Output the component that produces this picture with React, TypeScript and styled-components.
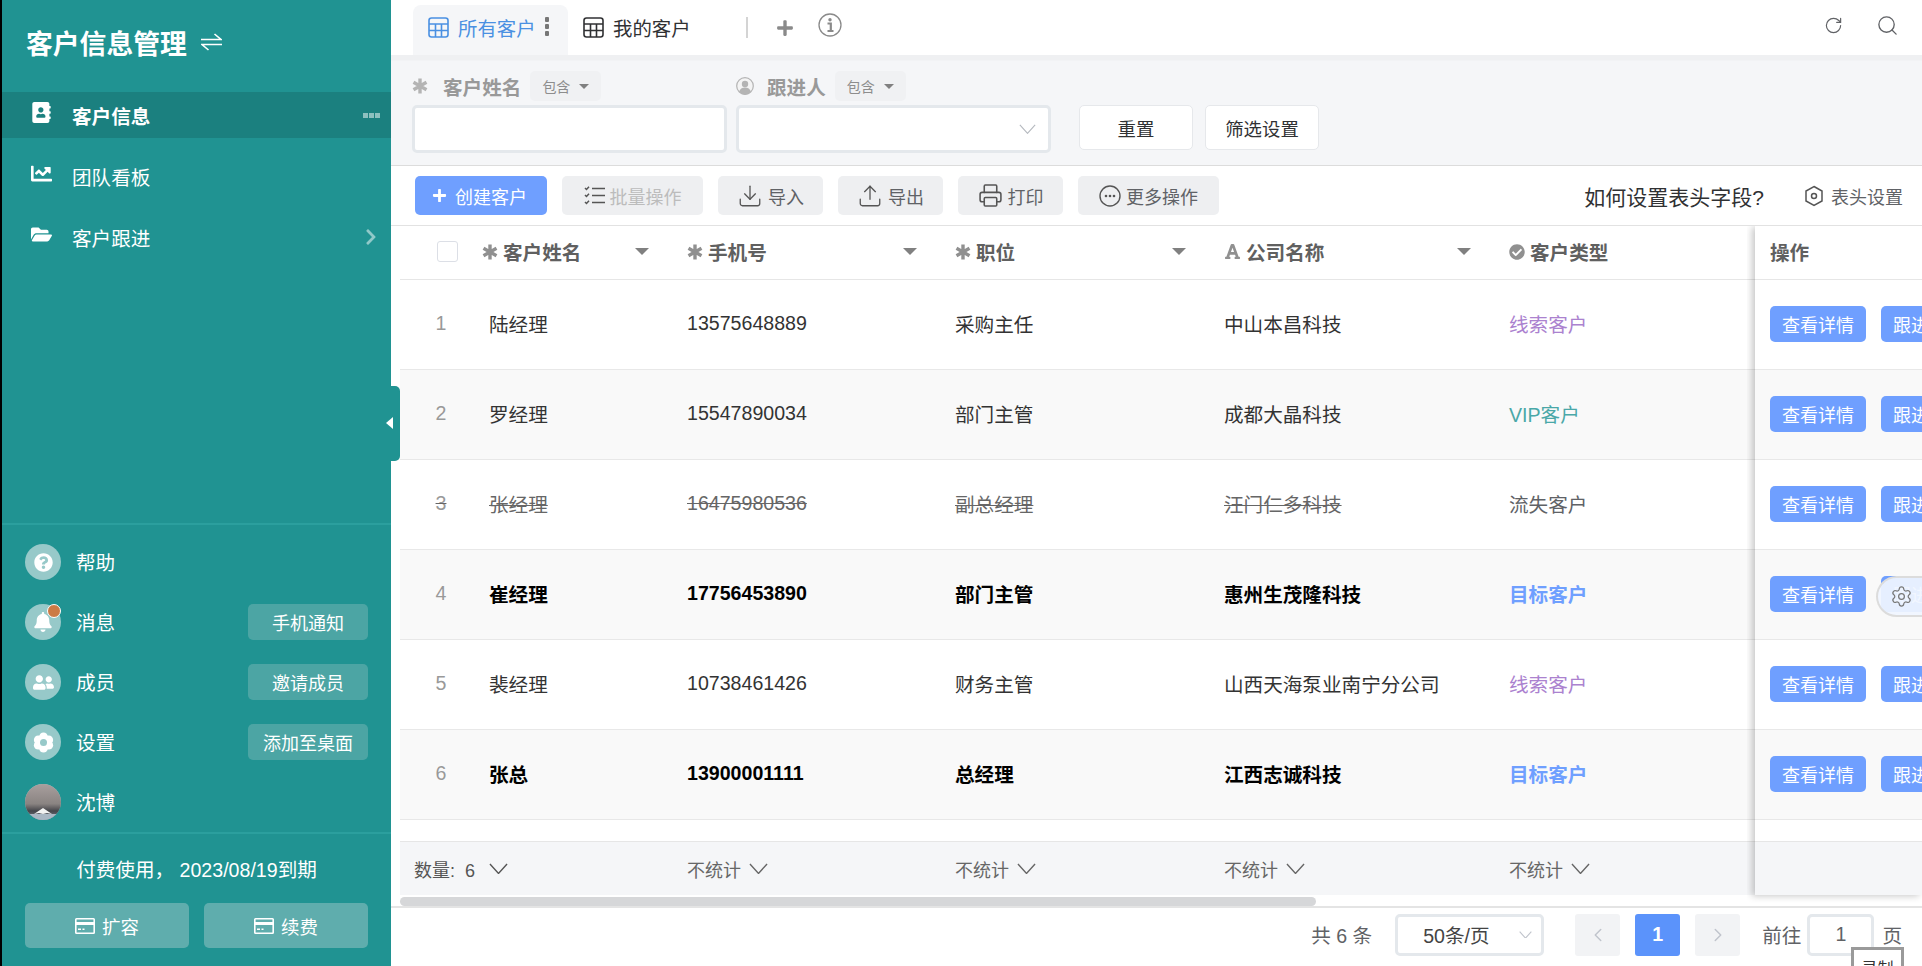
import React from "react";
import styled, { createGlobalStyle } from "styled-components";
import {
  FaAddressBook,
  FaBell,
  FaCheckCircle,
  FaChevronRight,
  FaChartLine,
  FaFolderOpen,
  FaFont,
  FaPlus,
  FaQuestionCircle,
  FaUserFriends,
} from "react-icons/fa";
import {
  ChevronLeft,
  ChevronRight,
  Download,
  Printer,
  RotateCw,
  Search,
  Settings,
  Upload,
} from "lucide-react";

const COLUMNS = "82px 205px 268px 269px 285px 246px";

const GlobalStyle = createGlobalStyle`
  html, body {
    margin: 0;
    height: 100%;
    overflow: hidden;
    background: #fff;
    font-family: "Liberation Sans", "Noto Sans CJK SC", sans-serif;
  }
  * { box-sizing: border-box; }
`;

const Shell = styled.div`
  display: flex;
  width: 1922px;
  height: 966px;
  border-left: 2px solid #000;
  overflow: hidden;
`;

const Sidebar = styled.aside`
  position: relative;
  z-index: 3;
  flex: 0 0 389px;
  display: flex;
  flex-direction: column;
  background: #209392;
  color: #fff;
`;

const Brand = styled.div`
  height: 92px;
  display: flex;
  align-items: center;
  padding: 0 0 8px 24px;
  gap: 14px;
  font-size: 26.8px;
  font-weight: 700;
`;

const Nav = styled.nav`
  display: flex;
  flex-direction: column;
  gap: 15px;
`;

const NavItem = styled.div<{ $active?: boolean }>`
  height: 46px;
  display: flex;
  align-items: center;
  padding: 0 11px 0 29px;
  font-size: 19.6px;
  font-weight: ${(p) => (p.$active ? 700 : 400)};
  background: ${(p) => (p.$active ? "#1b807f" : "transparent")};
`;

const NavIcon = styled.span`
  width: 41px;
  display: flex;
  font-size: 21px;
  margin-top: -6px;
`;

const NavTrail = styled.span`
  margin-left: auto;
  display: flex;
  gap: 1px;
  align-items: center;
  color: rgba(255, 255, 255, 0.5);
`;

const Dot = styled.i`
  width: 5px;
  height: 5px;
  background: rgba(255, 255, 255, 0.5);
`;

const Collapse = styled.div`
  position: absolute;
  left: 100%;
  top: 386px;
  width: 9px;
  height: 75px;
  background: #209392;
  border-radius: 0 5px 5px 0;

  &::before {
    content: "";
    position: absolute;
    left: -5px;
    top: 31px;
    border-style: solid;
    border-width: 6px 7px 6px 0;
    border-color: transparent #fff transparent transparent;
  }
`;

const Lower = styled.div`
  margin-top: auto;
  border-top: 2px solid #2b9f9e;
`;

const UtilityList = styled.div`
  display: flex;
  flex-direction: column;
  padding: 7px 23px 0;
  height: 309px;
  border-bottom: 2px solid #2b9f9e;
`;

const UtilityRow = styled.div`
  height: 60px;
  display: flex;
  align-items: center;
  gap: 15px;
  font-size: 19.6px;
`;

const UtilityLabel = styled.span`
  margin-top: -2px;
`;

const Round = styled.span`
  position: relative;
  width: 36px;
  height: 36px;
  border-radius: 50%;
  background: #97c9c9;
  display: flex;
  align-items: center;
  justify-content: center;
  color: #fff;
`;

const Badge = styled.i`
  position: absolute;
  right: 0;
  top: 0;
  width: 14px;
  height: 14px;
  border-radius: 50%;
  background: #cc7a45;
  border: 1px solid #fff;
`;

const SideButton = styled.button`
  margin-left: auto;
  width: 120px;
  height: 36px;
  padding: 0;
  border: 0;
  border-radius: 5px;
  background: #4ca5a4;
  color: #fff;
  font: inherit;
  font-size: 18px;
`;

const Expiry = styled.div`
  height: 69px;
  display: flex;
  align-items: center;
  justify-content: center;
  font-size: 19.6px;
`;

const BillingRow = styled.div`
  display: flex;
  gap: 15px;
  padding: 0 23px 18px;
`;

const BillingButton = styled.button`
  flex: 1;
  height: 45px;
  display: flex;
  align-items: center;
  justify-content: center;
  gap: 7px;
  border: 0;
  border-radius: 5px;
  background: #5fadad;
  color: #fff;
  font: inherit;
  font-size: 18.5px;
`;

const Main = styled.main`
  flex: 1;
  min-width: 0;
  display: flex;
  flex-direction: column;
`;

const TabBar = styled.header`
  height: 55px;
  display: flex;
  align-items: flex-end;
  padding: 0 23px 0 22px;
`;

const Tab = styled.div<{ $active?: boolean }>`
  height: 50px;
  width: 155px;
  display: flex;
  align-items: center;
  gap: 9px;
  padding: 0 0 5px 15px;
  font-size: 19.4px;
  border-radius: 8px 8px 0 0;
  color: ${(p) => (p.$active ? "#4a90e2" : "#303133")};
  background: ${(p) => (p.$active ? "#f5f6f8" : "transparent")};
`;

const TabDots = styled.span`
  display: flex;
  flex-direction: column;
  gap: 2px;
  margin-bottom: 3px;

  i {
    width: 4px;
    height: 5px;
    border-radius: 1px;
    background: #777;
  }
`;

const TabTools = styled.div`
  height: 55px;
  display: flex;
  align-items: center;
  gap: 24px;
  margin-left: 23px;
  color: #8a8a8a;
`;

const TabDivider = styled.i`
  width: 2px;
  height: 21px;
  background: #d4d4d4;
  margin-right: 4px;
`;

const RaisedIcon = styled.span`
  display: flex;
  margin-top: -5px;
`;

const TabActions = styled.div`
  margin-left: auto;
  height: 55px;
  padding-bottom: 4px;
  display: flex;
  align-items: center;
  gap: 33px;
  color: #606266;
`;

const FilterBar = styled.section`
  height: 111px;
  display: flex;
  padding: 16px 0 0 21px;
  gap: 9px;
  background: linear-gradient(#eff0f2 0, #eff0f2 5px, #f5f6f8 6px);
  border-bottom: 1px solid #dcdcdc;
`;

const FilterField = styled.div`
  width: 315px;
  display: flex;
  flex-direction: column;
  gap: 4px;
`;

const FilterLabel = styled.div`
  height: 30px;
  display: flex;
  align-items: center;
  color: #999;
  font-size: 19.6px;
  font-weight: 700;
`;

const LabelIcon = styled.span`
  width: 31px;
  display: flex;
  color: #b4b4b4;
`;

const MatchTag = styled.span`
  margin-left: 9px;
  width: 71px;
  height: 30px;
  display: flex;
  align-items: center;
  justify-content: center;
  gap: 9px;
  border-radius: 5px;
  background: #f0f1f3;
  color: #8d8d8d;
  font-size: 14px;
  font-weight: 400;
`;

const Caret = styled.i`
  border-style: solid;
  border-width: 5px 5px 0;
  border-color: #808080 transparent transparent;
`;

const FieldBox = styled.div`
  height: 48px;
  display: flex;
  align-items: center;
  justify-content: flex-end;
  padding-right: 12px;
  background: #fff;
  border: 3px solid #e4e8ec;
  border-radius: 5px;
  color: #b4b8be;
`;

const FilterActions = styled.div`
  display: flex;
  align-self: flex-start;
  gap: 12px;
  margin: 34px 0 0 19px;
`;

const PlainButton = styled.button`
  width: 114px;
  height: 45px;
  padding: 0;
  background: #fff;
  border: 1px solid #e6e8eb;
  border-radius: 5px;
  color: #303133;
  font: inherit;
  font-size: 18.4px;
`;

const Toolbar = styled.section`
  height: 60px;
  display: flex;
  align-items: center;
  gap: 15px;
  padding: 0 19px 0 24px;
  border-bottom: 1px solid #e2e2e2;
`;

const ToolButton = styled.button<{ $primary?: boolean; $muted?: boolean; $w: number }>`
  width: ${(p) => p.$w}px;
  height: 39px;
  padding: 0 ${(p) => (p.$primary ? 3 : 0)}px 0 0;
  display: flex;
  align-items: center;
  justify-content: center;
  gap: ${(p) => (p.$primary ? 8 : 5)}px;
  border: 0;
  border-radius: 5px;
  font: inherit;
  font-size: 18px;
  background: ${(p) => (p.$primary ? "#6f9fff" : "#eeeff1")};
  color: ${(p) => (p.$primary ? "#fff" : "#555")};

  span {
    color: ${(p) => (p.$muted ? "#bcbcbc" : "#606266")};
  }
`;

const ToolbarRight = styled.div`
  margin-left: auto;
  display: flex;
  align-items: center;
  color: #606266;
  font-size: 18px;
`;

const HelpLink = styled.span`
  font-size: 21px;
  color: #303133;
  margin-right: 40px;
`;

const HeadSetting = styled.span`
  display: flex;
  align-items: center;
  gap: 7px;
`;

const TableArea = styled.section`
  position: relative;
  height: 669px;
  display: flex;
  padding-left: 9px;
`;

const ScrollPane = styled.div`
  flex: 1;
  min-width: 0;
  display: flex;
  flex-direction: column;
`;

const FixedPane = styled.div`
  position: relative;
  z-index: 2;
  flex: 0 0 167px;
  display: flex;
  flex-direction: column;
  overflow: hidden;
  box-shadow: -3px 1px 7px rgba(0, 0, 0, 0.22);
  clip-path: inset(0 0 -8px -8px);
`;

const HeadRow = styled.div`
  height: 54px;
  flex: none;
  display: grid;
  grid-template-columns: ${COLUMNS};
  padding-bottom: 2px;
  border-bottom: 1px solid #e6e6e6;
  background: #fff;
`;

const HeadCell = styled.div`
  display: flex;
  align-items: center;
  gap: 5px;
  padding-right: 38px;
  color: #606060;
  font-size: 19.6px;
  font-weight: 700;
`;

const HeadIcon = styled.span`
  display: flex;
  color: #909090;
`;

const HeadCaret = styled(Caret)`
  margin-left: auto;
  border-width: 7px 7px 0;
`;

const CheckCell = styled.div`
  display: flex;
  align-items: center;
  padding-left: 37px;
`;

const CheckBox = styled.i`
  width: 21px;
  height: 21px;
  border: 1px solid #dcdfe6;
  border-radius: 3px;
  background: #fff;
`;

const BodyRow = styled.div<{ $even: boolean; $kind: "plain" | "strike" | "bold" }>`
  height: 90px;
  flex: none;
  display: grid;
  grid-template-columns: ${COLUMNS};
  align-items: center;
  padding-bottom: 2px;
  border-bottom: 1px solid #e8e8e8;
  font-size: 19.6px;
  font-weight: ${(p) => (p.$kind === "bold" ? 700 : 400)};
  color: ${(p) => (p.$kind === "bold" ? "#000" : p.$kind === "strike" ? "#666" : "#333")};
  text-decoration: ${(p) => (p.$kind === "strike" ? "line-through" : "none")};
  background: ${(p) => (p.$even ? "#f9f9f9" : "#fff")};
`;

const IndexCell = styled.div`
  text-align: center;
  color: #999;
  font-weight: 400;
`;

const NameCell = styled.div`
  padding-left: 7px;
`;

const TypeCell = styled.div<{ $color: string }>`
  display: inline-block;
  color: ${(p) => p.$color};
`;

const Spacer = styled.div`
  flex: 1;
  border-bottom: 1px solid #e6e6e6;
  background: #fff;
`;

const SummaryRow = styled.div`
  height: 53px;
  flex: none;
  display: grid;
  grid-template-columns: ${COLUMNS};
  align-items: center;
  background: #f5f6f8;
  color: #666;
  font-size: 18px;
`;

const SummaryCell = styled.div`
  display: flex;
  align-items: center;
  gap: 8px;
`;

const CountCell = styled(SummaryCell)`
  grid-column: span 2;
  padding-left: 14px;
  gap: 14px;
  color: #555;
`;

const OpHead = styled.div`
  height: 54px;
  flex: none;
  display: flex;
  align-items: center;
  padding: 0 0 2px 15px;
  border-bottom: 1px solid #e6e6e6;
  background: #fff;
  color: #606060;
  font-size: 19.6px;
  font-weight: 700;
`;

const OpRow = styled.div<{ $even: boolean }>`
  height: 90px;
  flex: none;
  display: flex;
  align-items: center;
  gap: 15px;
  padding: 0 0 2px 15px;
  border-bottom: 1px solid #e8e8e8;
  background: ${(p) => (p.$even ? "#f9f9f9" : "#fff")};
`;

const OpButton = styled.button`
  flex: none;
  width: 96px;
  height: 36px;
  padding: 0;
  border: 0;
  border-radius: 5px;
  background: #6f9fff;
  color: #fff;
  font: inherit;
  font-size: 18px;
`;

const OpSummary = styled.div`
  height: 53px;
  flex: none;
  background: #f5f6f8;
`;

const FloatGear = styled.div`
  position: absolute;
  z-index: 4;
  right: 0;
  top: 350px;
  width: 46px;
  height: 41px;
  display: flex;
  align-items: center;
  padding-left: 12px;
  border: 2px solid #dcdcdc;
  border-right: 0;
  border-radius: 21px 0 0 21px;
  background: rgba(240, 245, 255, 0.92);
  color: #777;
`;

const ScrollTrack = styled.div`
  height: 13px;
  flex: none;
  padding: 2px 0 0 9px;
  border-bottom: 2px solid #e4e4e4;
`;

const ScrollThumb = styled.div`
  width: 916px;
  height: 9px;
  border-radius: 5px;
  background: #d6d7d9;
`;

const Pagination = styled.footer`
  position: relative;
  height: 58px;
  flex: none;
  display: flex;
  align-items: center;
  justify-content: flex-end;
  padding: 0 20px 5px 0;
  color: #606266;
  font-size: 19.6px;
`;

const PageSelect = styled.div`
  width: 149px;
  height: 42px;
  margin: 0 31px 0 23px;
  display: flex;
  align-items: center;
  padding: 0 9px 0 25px;
  justify-content: space-between;
  border: 3px solid #e4e8ec;
  border-radius: 5px;
  color: #444;

  svg {
    color: #c0c4cc;
  }
`;

const PageButton = styled.span<{ $current?: boolean }>`
  width: 45px;
  height: 42px;
  margin-right: 15px;
  display: flex;
  align-items: center;
  justify-content: center;
  border-radius: 3px;
  font-weight: 700;
  background: ${(p) => (p.$current ? "#5b93fb" : "#f2f3f5")};
  color: ${(p) => (p.$current ? "#fff" : "#c0c4cc")};
`;

const Jump = styled.span`
  margin-left: 7px;
`;

const JumpBox = styled.div`
  width: 67px;
  height: 42px;
  margin: 0 8px 0 6px;
  display: flex;
  align-items: center;
  justify-content: center;
  border: 3px solid #e4e8ec;
  border-radius: 5px;
`;

const CopyHint = styled.div`
  position: absolute;
  right: 18px;
  top: 39px;
  width: 53px;
  height: 36px;
  padding-top: 5px;
  text-align: center;
  background: #fff;
  border: 3px solid #9a9a9a;
  color: #333;
  font-size: 16px;
`;

const Chevron = ({ w, stroke = 1.4 }: { w: number; stroke?: number }) => (
  <svg width={w} height={w * 0.6} viewBox="0 0 20 12" fill="none" stroke="currentColor" strokeWidth={(stroke * 20) / w}>
    <path d="M1 1l9 10 9-10" />
  </svg>
);

const Asterisk = ({ size = 16 }: { size?: number }) => (
  <svg width={size} height={size} viewBox="0 0 16 16" fill="none" stroke="currentColor" strokeWidth="3.4">
    <path d="M8 .5v15M1.500 4.250l13 7.500M14.500 4.250l-13 7.500" />
  </svg>
);

const TableIcon = () => (
  <svg width="21" height="21" viewBox="0 0 21 21" fill="none" stroke="currentColor" strokeWidth="1.6">
    <rect x="1" y="1" width="19" height="19" rx="2.5" />
    <path d="M1 7h19M1 13.5h19M7.500 7v13M13.500 7v13" />
  </svg>
);

const SwapIcon = () => (
  <svg width="21" height="18" viewBox="0 0 21 18" fill="none" stroke="#fff" strokeWidth="1.6">
    <path d="M0 6.500h20L13.500 1M21 11.500H1l6.500 5.500" />
  </svg>
);

const CardIcon = () => (
  <svg width="20" height="16" viewBox="0 0 20 16" fill="#fff">
    <path d="M1.500 0h17A1.500 1.500 0 0 1 20 1.500v13a1.500 1.500 0 0 1-1.500 1.500h-17A1.500 1.500 0 0 1 0 14.500v-13A1.500 1.500 0 0 1 1.500 0Zm.1 7v7.400h16.800V7Zm0-5.400V4h16.800V1.600ZM3 10.500h3v1.500H3Zm4.500 0h2v1.500h-2Z" fillRule="evenodd" />
  </svg>
);

const FlowerIcon = () => (
  <svg width="21" height="21" viewBox="0 0 24 24" fill="#fff">
    <circle cx="12" cy="5.500" r="5" />
    <circle cx="12" cy="18.500" r="5" />
    <circle cx="6" cy="9" r="5" />
    <circle cx="18" cy="9" r="5" />
    <circle cx="6" cy="15" r="5" />
    <circle cx="18" cy="15" r="5" />
    <circle cx="12" cy="12" r="4" fill="#97c9c9" />
  </svg>
);

const UserDisc = () => (
  <svg width="18" height="18" viewBox="0 0 18 18">
    <circle cx="9" cy="9" r="8.300" fill="#f4f4f4" stroke="#b4b4b4" strokeWidth="1.200" />
    <circle cx="9" cy="7" r="3.200" fill="#b4b4b4" />
    <path d="M3 15c.8-3.300 3.200-4.500 6-4.500s5.200 1.200 6 4.500a8 8 0 0 1-12 0Z" fill="#b4b4b4" />
  </svg>
);

const InfoIcon = () => (
  <svg width="24" height="24" viewBox="0 0 24 24" fill="none" stroke="#8a8a8a">
    <circle cx="12" cy="12" r="11" strokeWidth="1.300" />
    <circle cx="12" cy="6.800" r="1.700" fill="#8a8a8a" stroke="none" />
    <path d="M9.500 10.500h3.300v7M9.500 18h6" strokeWidth="2.200" />
  </svg>
);

const HexIcon = () => (
  <svg width="20" height="22" viewBox="0 0 20 22" fill="none" stroke="#555" strokeWidth="1.500">
    <path d="M10 1.500 18 6v10l-8 4.500L2 16V6Z" />
    <circle cx="10" cy="11" r="2.500" />
  </svg>
);

const BatchIcon = () => (
  <svg width="21" height="19" viewBox="0 0 21 19" fill="none" stroke="#555" strokeWidth="1.500">
    <path d="M1 2l1.500 1.500L5 .8M1 9l1.500 1.500L5 7.800M1 16l1.500 1.500L5 14.800M8 2.500h13M8 9.500h13M8 16.500h13" />
  </svg>
);

const MoreIcon = () => (
  <svg width="22" height="22" viewBox="0 0 22 22" fill="#555">
    <circle cx="11" cy="11" r="10" fill="none" stroke="#555" strokeWidth="1.400" />
    <circle cx="7" cy="11" r="1.300" />
    <circle cx="11" cy="11" r="1.300" />
    <circle cx="15" cy="11" r="1.300" />
  </svg>
);

const Avatar = () => (
  <svg width="36" height="36" viewBox="0 0 36 36">
    <defs>
      <linearGradient id="sky" x1="0" y1="0" x2="0" y2="1">
        <stop offset="0" stopColor="#a99f9e" />
        <stop offset="0.55" stopColor="#8a8482" />
        <stop offset="0.75" stopColor="#45454a" />
        <stop offset="1" stopColor="#7b8794" />
      </linearGradient>
      <clipPath id="disc">
        <circle cx="18" cy="18" r="18" />
      </clipPath>
    </defs>
    <g clipPath="url(#disc)">
      <rect width="36" height="36" fill="url(#sky)" />
      <path d="M9 30 18 24l9 6-5-1-4 1-4-1Z" fill="#f2f2f2" />
      <rect y="30" width="36" height="6" fill="#aab7c4" />
    </g>
  </svg>
);

type Customer = {
  name: string;
  phone: string;
  job: string;
  company: string;
  type: string;
  typeColor: string;
  kind: "plain" | "strike" | "bold";
};

const customers: Customer[] = [
  { name: "陆经理", phone: "13575648889", job: "采购主任", company: "中山本昌科技", type: "线索客户", typeColor: "#ab82cf", kind: "plain" },
  { name: "罗经理", phone: "15547890034", job: "部门主管", company: "成都大晶科技", type: "VIP客户", typeColor: "#4aa8a8", kind: "plain" },
  { name: "张经理", phone: "16475980536", job: "副总经理", company: "汪门仁多科技", type: "流失客户", typeColor: "#606266", kind: "strike" },
  { name: "崔经理", phone: "17756453890", job: "部门主管", company: "惠州生茂隆科技", type: "目标客户", typeColor: "#6f9fff", kind: "bold" },
  { name: "裴经理", phone: "10738461426", job: "财务主管", company: "山西天海泵业南宁分公司", type: "线索客户", typeColor: "#ab82cf", kind: "plain" },
  { name: "张总", phone: "13900001111", job: "总经理", company: "江西志诚科技", type: "目标客户", typeColor: "#6f9fff", kind: "bold" },
];

const utilities = [
  { label: "帮助", icon: <FaQuestionCircle size={19} /> },
  { label: "消息", icon: <FaBell size={20} />, badge: true, action: "手机通知" },
  { label: "成员", icon: <FaUserFriends size={21} />, action: "邀请成员" },
  { label: "设置", icon: <FlowerIcon />, action: "添加至桌面" },
];

const tools = [
  { label: "批量操作", icon: <BatchIcon />, w: 141, muted: true },
  { label: "导入", icon: <Download size={26} strokeWidth={1.2} />, w: 105 },
  { label: "导出", icon: <Upload size={26} strokeWidth={1.2} />, w: 105 },
  { label: "打印", icon: <Printer size={25} strokeWidth={1.5} />, w: 105 },
  { label: "更多操作", icon: <MoreIcon />, w: 141 },
];

const head = [
  { label: "手机号", icon: <Asterisk />, caret: true },
  { label: "职位", icon: <Asterisk />, caret: true },
  { label: "公司名称", icon: <FaFont size={17} />, caret: true },
  { label: "客户类型", icon: <FaCheckCircle size={16} />, caret: false },
];

export default function App() {
  return (
    <>
      <GlobalStyle />
      <Shell>
        <Sidebar>
          <Brand>
            客户信息管理
            <SwapIcon />
          </Brand>
          <Nav>
            <NavItem $active>
              <NavIcon>
                <FaAddressBook />
              </NavIcon>
              客户信息
              <NavTrail>
                <Dot />
                <Dot />
                <Dot />
              </NavTrail>
            </NavItem>
            <NavItem>
              <NavIcon>
                <FaChartLine />
              </NavIcon>
              团队看板
            </NavItem>
            <NavItem>
              <NavIcon>
                <FaFolderOpen />
              </NavIcon>
              客户跟进
              <NavTrail>
                <FaChevronRight size={18} />
              </NavTrail>
            </NavItem>
          </Nav>
          <Collapse />
          <Lower>
            <UtilityList>
              {utilities.map((u) => (
                <UtilityRow key={u.label}>
                  <Round>
                    {u.icon}
                    {u.badge && <Badge />}
                  </Round>
                  <UtilityLabel>{u.label}</UtilityLabel>
                  {u.action && <SideButton>{u.action}</SideButton>}
                </UtilityRow>
              ))}
              <UtilityRow>
                <Round>
                  <Avatar />
                </Round>
                <UtilityLabel>沈博</UtilityLabel>
              </UtilityRow>
            </UtilityList>
            <Expiry>付费使用， 2023/08/19到期</Expiry>
            <BillingRow>
              <BillingButton>
                <CardIcon />
                扩容
              </BillingButton>
              <BillingButton>
                <CardIcon />
                续费
              </BillingButton>
            </BillingRow>
          </Lower>
        </Sidebar>

        <Main>
          <TabBar>
            <Tab $active>
              <TableIcon />
              所有客户
              <TabDots>
                <i />
                <i />
                <i />
              </TabDots>
            </Tab>
            <Tab>
              <TableIcon />
              我的客户
            </Tab>
            <TabTools>
              <TabDivider />
              <FaPlus size={18} />
              <RaisedIcon>
                <InfoIcon />
              </RaisedIcon>
            </TabTools>
            <TabActions>
              <RotateCw size={19} strokeWidth={1.5} />
              <Search size={23} strokeWidth={1.4} />
            </TabActions>
          </TabBar>

          <FilterBar>
            <FilterField>
              <FilterLabel>
                <LabelIcon>
                  <Asterisk />
                </LabelIcon>
                客户姓名
                <MatchTag>
                  包含
                  <Caret />
                </MatchTag>
              </FilterLabel>
              <FieldBox />
            </FilterField>
            <FilterField>
              <FilterLabel>
                <LabelIcon>
                  <UserDisc />
                </LabelIcon>
                跟进人
                <MatchTag>
                  包含
                  <Caret />
                </MatchTag>
              </FilterLabel>
              <FieldBox>
                <Chevron w={17} stroke={1.1} />
              </FieldBox>
            </FilterField>
            <FilterActions>
              <PlainButton>重置</PlainButton>
              <PlainButton>筛选设置</PlainButton>
            </FilterActions>
          </FilterBar>

          <Toolbar>
            <ToolButton $primary $w={132}>
              <FaPlus size={15} />
              创建客户
            </ToolButton>
            {tools.map((t) => (
              <ToolButton key={t.label} $w={t.w} $muted={t.muted}>
                {t.icon}
                <span>{t.label}</span>
              </ToolButton>
            ))}
            <ToolbarRight>
              <HelpLink>如何设置表头字段?</HelpLink>
              <HeadSetting>
                <HexIcon />
                表头设置
              </HeadSetting>
            </ToolbarRight>
          </Toolbar>

          <TableArea>
            <ScrollPane>
              <HeadRow>
                <CheckCell>
                  <CheckBox />
                </CheckCell>
                <HeadCell>
                  <HeadIcon>
                    <Asterisk />
                  </HeadIcon>
                  客户姓名
                  <HeadCaret />
                </HeadCell>
                {head.map((h) => (
                  <HeadCell key={h.label}>
                    <HeadIcon>{h.icon}</HeadIcon>
                    {h.label}
                    {h.caret && <HeadCaret />}
                  </HeadCell>
                ))}
              </HeadRow>
              {customers.map((c, i) => (
                <BodyRow key={c.phone} $even={i % 2 === 1} $kind={c.kind}>
                  <IndexCell>{i + 1}</IndexCell>
                  <NameCell>{c.name}</NameCell>
                  <div>{c.phone}</div>
                  <div>{c.job}</div>
                  <div>{c.company}</div>
                  <div>
                    <TypeCell $color={c.typeColor}>{c.type}</TypeCell>
                  </div>
                </BodyRow>
              ))}
              <Spacer />
              <SummaryRow>
                <CountCell>
                  <span>数量:&nbsp; 6</span>
                  <Chevron w={19} />
                </CountCell>
                {[0, 1, 2, 3].map((n) => (
                  <SummaryCell key={n}>
                    不统计
                    <Chevron w={19} />
                  </SummaryCell>
                ))}
              </SummaryRow>
            </ScrollPane>
            <FixedPane>
              <OpHead>操作</OpHead>
              {customers.map((c, i) => (
                <OpRow key={c.phone} $even={i % 2 === 1}>
                  <OpButton>查看详情</OpButton>
                  <OpButton>跟进记录</OpButton>
                </OpRow>
              ))}
              <Spacer />
              <OpSummary />
            </FixedPane>
            <FloatGear>
              <Settings size={23} strokeWidth={1.3} />
            </FloatGear>
          </TableArea>

          <ScrollTrack>
            <ScrollThumb />
          </ScrollTrack>

          <Pagination>
            共 6 条
            <PageSelect>
              50条/页
              <Chevron w={13} stroke={1.1} />
            </PageSelect>
            <PageButton>
              <ChevronLeft size={22} strokeWidth={1.6} />
            </PageButton>
            <PageButton $current>1</PageButton>
            <PageButton>
              <ChevronRight size={22} strokeWidth={1.6} />
            </PageButton>
            <Jump>前往</Jump>
            <JumpBox>1</JumpBox>页
            <CopyHint>录制</CopyHint>
          </Pagination>
        </Main>
      </Shell>
    </>
  );
}
